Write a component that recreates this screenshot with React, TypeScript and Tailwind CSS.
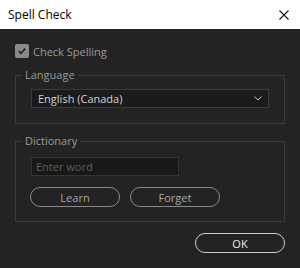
import React from "react";

export default function App() {
  const font = { fontFamily: '"Open Sans", "Noto Sans", sans-serif' };
  return (
    <div className="w-[300px] h-[268px] bg-[#232323] flex flex-col overflow-hidden" style={font}>
      <div className="h-[29px] bg-white flex items-center justify-between pl-[8px] pr-[11px] shrink-0">
        <span className="text-[12px] text-black leading-none">Spell Check</span>
        <svg width="10" height="10" viewBox="0 0 10 10" className="block">
          <path d="M0.5 0.5 L9.5 9.5 M9.5 0.5 L0.5 9.5" stroke="#111" strokeWidth="1.1" />
        </svg>
      </div>
      <div className="flex flex-col px-[15px]">
        <label className="flex items-center gap-[4px] mt-[15px] h-[14px]">
          <span className="w-[14px] h-[14px] rounded-[2px] bg-[#8a8a8a] flex items-center justify-center">
            <svg width="10" height="10" viewBox="0 0 10 10">
              <path d="M1.8 5.2 L4 7.3 L8.3 2.6" stroke="#262626" strokeWidth="1.8" fill="none" />
            </svg>
          </span>
          <span className="text-[11px] text-[#9c9c9c] leading-none">Check Spelling</span>
        </label>

        <fieldset className="mt-[9px] border border-[#3a3a3a] p-0 m-0 min-w-0">
          <legend className="ml-[6px] px-[3px] text-[11px] leading-[16px] text-[#9a9a9a]">Language</legend>
          <div className="px-[15px] pt-[6px] pb-[15px]">
            <div className="h-[19px] bg-[#1b1b1b] border border-[#3a3a3a] flex items-center justify-between pl-[6px] pr-[6px]">
              <span className="text-[11px] text-[#d2d2d2] leading-none">English (Canada)</span>
              <svg width="8" height="5" viewBox="0 0 8 5">
                <path d="M0.5 0.5 L4 4 L7.5 0.5" stroke="#c0c0c0" strokeWidth="1" fill="none" />
              </svg>
            </div>
          </div>
        </fieldset>

        <fieldset className="mt-[9px] border border-[#3a3a3a] p-0 m-0 min-w-0">
          <legend className="ml-[6px] px-[3px] text-[11px] leading-[16px] text-[#9a9a9a]">Dictionary</legend>
          <div className="px-[15px] pt-[8px] pb-[14px]">
            <div className="w-[148px] h-[19px] bg-[#181818] border border-[#333333] flex items-center pl-[4px]">
              <span className="text-[11px] text-[#5e5e5e] leading-none">Enter word</span>
            </div>
            <div className="flex gap-[10px] mt-[11px] -ml-[1px]">
              <button className="w-[90px] h-[20px] rounded-full border border-[#8a8a8a] text-[11px] text-[#a6a6a6] leading-none flex items-center justify-center">Learn</button>
              <button className="w-[90px] h-[20px] rounded-full border border-[#8a8a8a] text-[11px] text-[#a6a6a6] leading-none flex items-center justify-center">Forget</button>
            </div>
          </div>
        </fieldset>

        <div className="flex justify-end mt-[11px]">
          <button className="w-[90px] h-[20px] rounded-full border border-[#cfcfcf] text-[11px] text-[#ececec] leading-none flex items-center justify-center">OK</button>
        </div>
      </div>
    </div>
  );
}
